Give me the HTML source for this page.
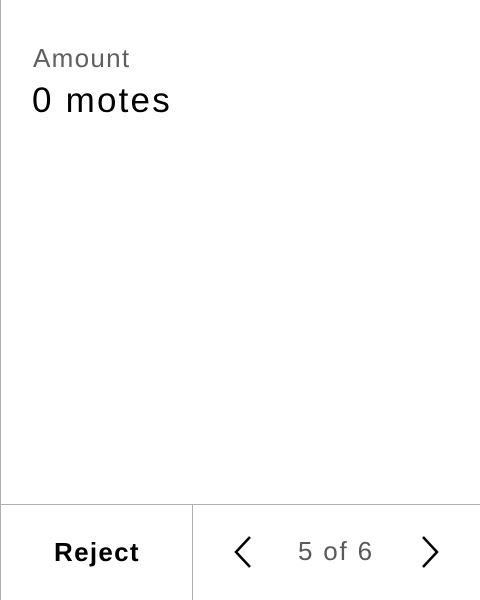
<!DOCTYPE html>
<html><head><style>
body{margin:0;width:480px;height:600px;background:#fff;font-family:"Liberation Sans",sans-serif;position:relative;overflow:hidden}
.lb{position:absolute;left:0;top:0;width:1px;height:600px;background:#b0b0b0}
.t1{position:absolute;left:33px;top:43px;font-size:26px;letter-spacing:1.3px;color:#5f5f5f}
.t2{position:absolute;left:32px;top:81px;font-size:35px;letter-spacing:2.2px;color:#000}
.ft{position:absolute;left:0;top:504px;width:480px;height:1px;background:#b0b0b0}
.dv{position:absolute;left:192px;top:505px;width:1px;height:95px;background:#b0b0b0}
.rj{position:absolute;left:54px;top:537px;font-size:26px;letter-spacing:1.3px;font-weight:bold;color:#000}
.pg{position:absolute;left:298px;top:536px;font-size:26px;letter-spacing:1.8px;color:#5a5a5a}
</style></head><body>
<div class="lb"></div>
<div class="t1">Amount</div>
<div class="t2">0 motes</div>
<div class="ft"></div>
<div class="dv"></div>
<div class="rj">Reject</div>
<svg style="position:absolute;left:230px;top:534px" width="30" height="36"><path d="M20 3 L6 18 L20 33" fill="none" stroke="#000" stroke-width="2.5"/></svg>
<div class="pg">5 of 6</div>
<svg style="position:absolute;left:415px;top:534px" width="30" height="36"><path d="M8 3 L22 18 L8 33" fill="none" stroke="#000" stroke-width="2.5"/></svg>
</body></html>
